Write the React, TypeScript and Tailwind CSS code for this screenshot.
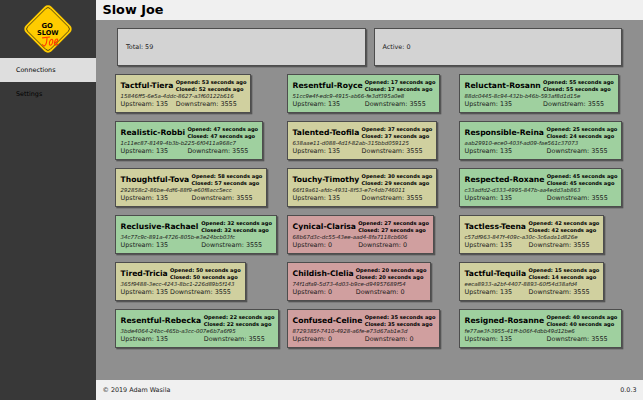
type Conn = {
  name: string;
  id: string;
  opened: number;
  closed: number;
  tone: "idle" | "good" | "bad";
  nameWidth: number;
};

const tones = {
  idle: "bg-[#d0d09f]",
  good: "bg-[#9fd09f]",
  bad: "bg-[#d09f9f]",
};

const c = (
  name: string,
  id: string,
  opened: number,
  closed: number,
  tone: Conn["tone"],
  nameWidth: number,
): Conn => ({ name, id, opened, closed, tone, nameWidth });

const connections: Conn[] = [
  c("Tactful-Tiera", "15846ff5-6e5a-4ddc-8627-a3f60122b616", 53, 52, "idle", 55.2),
  c("Resentful-Royce", "51cc9e4f-edc9-4915-ab66-fe3df395a0e8", 17, 17, "good", 72.2),
  c("Reluctant-Rosann", "88dc0445-8c94-432b-b46b-593af8d1d15e", 55, 55, "good", 78.5),
  c("Realistic-Robbi", "1c11ec87-8149-4b3b-b225-6f0411a968c7", 47, 47, "good", 66.8),
  c("Talented-Teofila", "638aae11-d088-4d1f-82ab-315bbd059125", 37, 37, "idle", 69),
  c("Responsible-Reina", "aab29910-ece0-403f-ad09-fae561c37073", 25, 24, "good", 82),
  c("Thoughtful-Tova", "292858c2-86be-4df6-88f9-e60f8acc5ecc", 58, 57, "idle", 71),
  c("Touchy-Timothy", "66f19a61-afdc-4931-8f53-e7c4db746011", 30, 29, "idle", 69),
  c("Respected-Roxane", "c33adfd2-d333-4995-847b-aa4edd3ab863", 45, 45, "good", 82.2),
  c("Reclusive-Rachael", "34c77c9c-891a-4726-805b-e3e24bcb03fc", 32, 32, "good", 80.6),
  c("Cynical-Clarisa", "68b67d3c-dc55-43ee-aad4-8fa7118cb606", 27, 27, "bad", 65.6),
  c("Tactless-Teena", "c57df963-847f-409c-a30c-3c6ada1d826e", 42, 42, "idle", 64),
  c("Tired-Tricia", "365f9488-3ecc-4243-8bc1-226d89b5f143", 50, 50, "idle", 49.4),
  c("Childish-Clelia", "74f1dfa9-5d73-4d03-b9ce-d94957689f54", 20, 20, "bad", 63.2),
  c("Tactful-Tequila", "eeca8933-a2bf-4407-8893-60f54d38afd4", 15, 14, "idle", 64),
  c("Resentful-Rebecka", "3bde4064-24bc-465b-a3cc-007e6b7a6f95", 22, 22, "good", 83.2),
  c("Confused-Celine", "8729385f-7410-4928-a6fe-e73d67ab1e3d", 35, 35, "bad", 72.2),
  c("Resigned-Rosanne", "fe77ae3f-3955-41ff-b06f-4dbb49d12be6", 40, 40, "good", 82),
];

function Logo() {
  return (
    <svg viewBox="0 0 50 50" className="h-[50px] w-[50px]">
      <rect x="6.8" y="6.8" width="36.4" height="36.4" rx="5" transform="rotate(45 25 25)" fill="#fc0" />
      <rect x="9" y="9" width="32" height="32" rx="3.2" transform="rotate(45 25 25)" fill="none" stroke="#111" strokeWidth="0.65" />
      <text x="24.2" y="23.6" textAnchor="middle" fontSize="6.8" fontWeight="bold" fill="#000">GO</text>
      <text x="24.8" y="31.2" textAnchor="middle" fontSize="6.6" fontWeight="bold" fill="#000">SLOW</text>
      <g fill="none" stroke="#ff3a00" strokeWidth="1.1" strokeLinecap="round" strokeLinejoin="round">
        <path d="M19.5 33.9 26.6 33M24 33.5C24 37 23.4 40.3 21.8 41.7 20.7 42.3 20 41.5 19.6 40.6" />
        <path d="M28.8 35.2C26.5 35.8 25.6 40.6 27 41.2 29.3 41.6 31 36 28.8 35.2Z" />
        <path d="M31.7 38.6C34 38.3 35.4 36 34.3 35.1 32.7 34.4 30.7 38.6 31.7 40.4 32.4 41.5 34 40.9 34.9 40" />
      </g>
    </svg>
  );
}

function Stat({ label }: { label: string }) {
  return (
    <div className="flex h-[38px] flex-1 items-center border border-[#4d4d4d] bg-[#d3d3d3] px-2 pt-px text-[6.4px] text-[#1a1a1a] shadow-[1.3px_1.3px_0_#555]">
      {label}
    </div>
  );
}

function Card({ conn }: { conn: Conn }) {
  const bad = conn.tone === "bad";
  return (
    <div
      className={`grid h-[39px] w-max content-start justify-start justify-self-start whitespace-nowrap border border-[#4d4d4d] pt-[4.3px] pr-[4.3px] pl-[4.3px] shadow-[1.3px_1.3px_0_#555] ${tones[conn.tone]}`}
      style={{ gridTemplateColumns: `${conn.nameWidth}px 70.3px` }}
    >
      <div className="flex h-[14px] items-center pb-[2px] text-[7.62px] font-bold">{conn.name}</div>
      <div className="h-[14px] text-[5.12px] leading-[7px] font-bold">
        <div>Opened: {conn.opened} seconds ago</div>
        <div>Closed: {conn.closed} seconds ago</div>
      </div>
      <div className="col-span-2 h-[7px] text-[5.44px] leading-[7px] text-[#1a1a1a] italic">{conn.id}</div>
      <div className="h-2 text-[6.4px] leading-[8px] text-[#1a1a1a]">Upstream: {bad ? 0 : 135}</div>
      <div className="h-2 text-[6.4px] leading-[8px] text-[#1a1a1a]">Downstream: {bad ? 0 : 3555}</div>
    </div>
  );
}

export default function App() {
  return (
    <div className="flex h-[400px] w-[643px] overflow-hidden bg-[#8f8f8f] font-['DejaVu_Sans',sans-serif] text-[6.4px] text-black">
      <aside className="w-24 shrink-0 bg-[#383838]">
        <div className="flex h-[58px] items-center justify-center">
          <Logo />
        </div>
        <nav>
          <div className="flex h-6 items-center bg-[#dedede] pt-px pl-4">Connections</div>
          <div className="flex h-6 items-center pt-px pl-4">Settings</div>
        </nav>
      </aside>
      <div className="flex flex-1 flex-col">
        <header className="flex h-5 items-center bg-[#f0f0f0] pl-[6.5px] text-[12.8px] font-bold">Slow Joe</header>
        <main className="flex-1">
          <section className="flex gap-2 pt-2 pr-[21px] pl-[21px]">
            <Stat label="Total: 59" />
            <Stat label="Active: 0" />
          </section>
          <section className="grid grid-cols-[172px_172px_172px] gap-y-2 pt-2 pl-[19.3px]">
            {connections.map((conn) => (
              <Card key={conn.id} conn={conn} />
            ))}
          </section>
        </main>
        <footer className="flex h-5 items-center justify-between bg-[#f0f0f0] px-[6.5px] pt-px text-[#1a1a1a]">
          <span>© 2019 Adam Wasila</span>
          <span>0.0.3</span>
        </footer>
      </div>
    </div>
  );
}
